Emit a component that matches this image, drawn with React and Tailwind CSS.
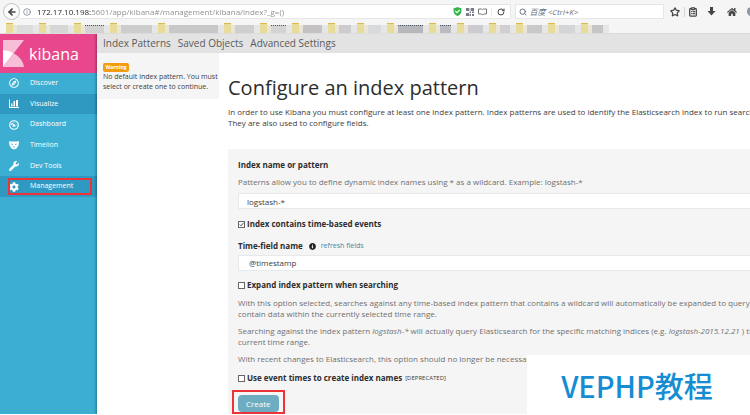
import React, { useState } from 'react';
import { FaHome, FaInfoCircle, FaRegCompass, FaWrench, FaCog } from 'react-icons/fa';
import { Search, Star, ClipboardList, RotateCw, Info, ArrowLeft } from 'lucide-react';

const bookmarks = [
  { width: 'w-[33px]', color: 'bg-[#dcdcdc]' },
  { width: 'w-[35px]', color: 'bg-[#d6d6d6]' },
  { width: 'w-[36px]', color: 'bg-[#d2d2d2]', label: true },
  { width: 'w-[48px]', color: 'bg-[#cdcdcd]' },
  { width: 'w-[66px]', color: 'bg-[#c8c8c8]' },
  { width: 'w-[36px]', color: 'bg-[#cfcfcf]' },
  { width: 'w-[32px]', color: 'bg-[#d4d4d4]', label: true },
  { width: 'w-[36px]', color: 'bg-[#c4c2c2]' },
  { width: 'w-[29px]', color: 'bg-[#cccccc]' },
  { width: 'w-[30px]', color: 'bg-[#d9dadc]' },
  { width: 'w-[42px]', color: 'bg-[#b8b8ba]', label: true },
  { width: 'w-[28px]', color: 'bg-[#bcbcc0]', label: true },
  { width: 'w-[32px]', color: 'bg-[#cbcbd0]' },
  { width: 'w-[27px]', color: 'bg-[#d0d0d0]' },
  { width: 'w-[32px]', color: 'bg-[#c9c9c9]' },
  { width: 'w-[33px]', color: 'bg-[#d3d5d8]' },
  { width: 'w-[28px]', color: 'bg-[#c6c6c6]' },
];

const ChartIcon = () => (
  <svg viewBox="0 0 20 20" className="size-[10px]" fill="currentColor">
    <path d="M0 1h2v15h18v2H0zM4 9h3v6H4zM9 4h3v11H9zM14 2h4v13h-4z" />
  </svg>
);

const DashboardIcon = () => (
  <svg viewBox="0 0 20 20" className="size-[10px]" fill="none" stroke="currentColor">
    <circle cx="10" cy="10" r="8.5" strokeWidth="2.4" />
    <path d="M5 10a5 5 0 0 1 2-4M10 4.5v1.5M15 10h-1.5M14 14l-1-1M6 14l1-1" strokeWidth="1.8" />
    <path d="M9.5 10.5l-3-4" strokeWidth="2.2" />
    <circle cx="10" cy="11" r="2.4" fill="currentColor" stroke="none" />
  </svg>
);

const TimelionIcon = () => (
  <svg viewBox="0 0 20 20" className="size-[10px]" fill="currentColor">
    <path
      fillRule="evenodd"
      d="M0 2l4 1h12l4-1-1 9-4 6-5 2-5-2-4-6zM5 7v2l3 1V8zM15 7l-3 1v2l3-1zM8 13l2 3 2-3z"
    />
  </svg>
);

const navItems = [
  { name: 'Discover', icon: <FaRegCompass className="size-[10px]" /> },
  { name: 'Visualize', icon: <ChartIcon />, active: true },
  { name: 'Dashboard', icon: <DashboardIcon /> },
  { name: 'Timelion', icon: <TimelionIcon /> },
  { name: 'Dev Tools', icon: <FaWrench className="size-[10px]" /> },
  { name: 'Management', icon: <FaCog className="size-[10px]" />, active: true, marked: true },
];

const BrowserBar = () => {
  const [url, setUrl] = useState('172.17.10.198:5601/app/kibana#/management/kibana/index?_g=()');

  return (
    <header className="bg-[#f5f5f5]">
      <div className="flex h-[23px] items-center pl-[3px] text-[#454545]">
        <button
          aria-label="Back"
          className="z-10 flex size-[17px] shrink-0 items-center justify-center rounded-full border border-[#c4c4c4] bg-[#fafafa]"
        >
          <ArrowLeft className="size-[10px]" strokeWidth={4} />
        </button>
        <div className="flex h-[15px] flex-1 items-center border-y border-r border-[#e6e6e6] bg-white">
          <Info className="ml-[3px] size-2 shrink-0 text-gray-500" />
          <input
            aria-label="Address"
            value={url}
            onChange={(e) => setUrl(e.target.value)}
            className="ml-[6px] min-w-0 flex-1 bg-[linear-gradient(90deg,#222_54px,#8a8a8a_54px)] bg-clip-text text-[8px] leading-[13px] text-transparent outline-none"
          />
          <svg viewBox="0 0 16 16" className="size-[9px] shrink-0">
            <path d="M1 2q4 0 7-2 3 2 7 2v6q-1 6-7 8-6-2-7-8z" fill="#36b44a" />
            <path d="M4 7l3 3 5-5" fill="none" stroke="#fff" strokeWidth="2" />
          </svg>
          <svg viewBox="0 0 16 16" className="ml-1 size-2 shrink-0" fill="#777b85">
            <path d="M0 0h6v6H0zM10 0h6v6h-6zM0 10h6v6H0zM7 7h3v3H7zM12 7h4v3h-4zM7 12h3v4H7zM12 12h4v4h-4zM7 1h2v4H7z" />
          </svg>
          <svg viewBox="0 0 18 16" className="ml-1 h-2 w-[9px] shrink-0" fill="none" stroke="#777" strokeWidth="2">
            <path d="M1 2h6l2 1 2-1h6v10h-6l-2 2-2-2H1z" />
          </svg>
          <span className="ml-1 h-2 border-l border-gray-200" />
          <button aria-label="Reload" className="mx-[5px]">
            <RotateCw className="size-2" strokeWidth={3} />
          </button>
        </div>
        <div className="ml-1 flex h-[15px] w-1/5 items-center border border-[#e6e6e6] bg-white">
          <Search className="ml-[3px] size-2 shrink-0 text-gray-500" strokeWidth={3} />
          <input
            aria-label="Search"
            placeholder="百度 <Ctrl+K>"
            className="ml-[3px] w-full min-w-0 text-[8px] leading-[13px] italic outline-none placeholder:text-gray-500"
          />
        </div>
        <div className="ml-[6px] flex w-[80px] items-center gap-[4px] overflow-hidden">
          <button aria-label="Bookmark" className="shrink-0"><Star className="size-[10px]" strokeWidth={3} /></button>
          <button aria-label="Bookmarks list" className="shrink-0 border-l border-gray-300 pl-[3px]">
            <ClipboardList className="size-[10px]" strokeWidth={3} />
          </button>
          <button aria-label="Downloads" className="shrink-0 px-[5px]">
            <svg viewBox="0 0 18 18" className="size-[9px]" fill="currentColor">
              <path d="M6 0h6v8h5l-8 9-8-9h5z" />
            </svg>
          </button>
          <button aria-label="Home" className="shrink-0 px-[2px]"><FaHome className="size-[10px]" /></button>
          <span className="ml-1 size-[9px] shrink-0 rounded-full bg-[#8b93a0]" />
        </div>
      </div>
      <div className="flex h-[11px] border-b border-[#dcdcdc] pl-[6px]">
        {bookmarks.map((bookmark, i) => (
          <div key={i} className={`flex h-[10px] items-stretch ${bookmark.width}`}>
            <span className="w-[7px] border-t border-[#dcb94a] bg-[#e8dc9a]" />
            <span className="mt-[2px] w-1 bg-[#e9e6d8]" />
            <span
              className={`mt-[2px] flex-1 border-t ${bookmark.color} ${bookmark.label ? 'border-dotted border-gray-600' : 'border-transparent'}`}
            />
            <span className="mt-[2px] w-[6px] bg-[#e6e6e6]" />
          </div>
        ))}
      </div>
    </header>
  );
};

const Sidebar = () => (
  <aside className="w-[97px] shrink-0 bg-[#3caed2] text-white shadow-[inset_-4px_0_3px_-3px_rgba(0,0,0,0.35)]">
    <div className="flex h-[39px] items-center bg-[#e8488b] pl-[3px] shadow-[inset_-4px_0_3px_-3px_rgba(0,0,0,0.35)]">
      <svg viewBox="0 0 63 81" className="h-[27px] w-[21px]">
        <path d="M0 0h63L32 40Q18 30 0 30z" fill="#f6bfd7" />
        <path d="M0 30q18 0 32 10L0 81z" fill="#fff" />
        <path d="M32 40q27 15 31 41H0z" fill="#f6bfd7" />
      </svg>
      <span className="ml-[5px] text-[16px] leading-6 font-medium">kibana</span>
    </div>
    <nav className="grid h-[124px] grid-rows-6">
      {navItems.map((item) => (
        <a
          key={item.name}
          href={`#/${item.name}`}
          className={`relative flex items-center gap-[11px] pl-[9px] text-[7px] ${item.active ? 'bg-[#2f99c1] shadow-[inset_-4px_0_3px_-3px_rgba(0,0,0,0.35)]' : ''}`}
        >
          {item.icon}
          {item.name}
          {item.marked && <span className="absolute inset-y-[2px] right-[5px] left-2 border-2 border-[#ee3338]" />}
        </a>
      ))}
    </nav>
  </aside>
);

const CheckField = ({ id, label, note, defaultChecked }) => {
  const [checked, setChecked] = useState(!!defaultChecked);

  return (
    <div className="flex h-3 items-center">
      <span className="relative flex">
        <input
          id={id}
          type="checkbox"
          checked={checked}
          onChange={(e) => setChecked(e.target.checked)}
          className="size-[7px] appearance-none border border-[#666] bg-white"
        />
        {checked && (
          <svg viewBox="0 0 8 8" className="pointer-events-none absolute inset-0 size-[7px]" fill="none" stroke="#333">
            <path d="M2 4l1.5 1.5L6.5 2" />
          </svg>
        )}
      </span>
      <label htmlFor={id} className="ml-[2px] font-bold text-[#2d2d2d]">{label}</label>
      {note && <small className="ml-[3px] text-[6px]">{note}</small>}
    </div>
  );
};

const IndexPatternForm = () => {
  const [pattern, setPattern] = useState('logstash-*');

  return (
    <form className="mt-[21px] flex-1 bg-[#f5f5f5] pt-[10px] pl-[10px] whitespace-nowrap">
      <label htmlFor="pattern" className="block leading-3 font-bold text-[#2d2d2d]">Index name or pattern</label>
      <p className="mt-[5px] leading-3 text-[#707070]">
        Patterns allow you to define dynamic index names using * as a wildcard. Example: logstash-*
      </p>
      <input
        id="pattern"
        value={pattern}
        onChange={(e) => setPattern(e.target.value)}
        className="mt-[5px] block h-4 w-full border border-r-0 border-[#e4eaec] bg-white pl-2 outline-none"
      />
      <div className="mt-[9px]">
        <CheckField id="time-based" label="Index contains time-based events" defaultChecked />
      </div>
      <div className="mt-[10px] flex h-3 items-center">
        <label htmlFor="time-field" className="font-bold text-[#2d2d2d]">Time-field name</label>
        <FaInfoCircle className="ml-[6px] size-[7px] text-[#222]" />
        <a href="#refresh" className="ml-[5px] text-[7px] text-[#328caa]">refresh fields</a>
      </div>
      <select
        id="time-field"
        className="mt-[3px] block h-4 w-full appearance-none border border-r-0 border-[#e4eaec] bg-white pl-[10px] outline-none"
      >
        <option>@timestamp</option>
      </select>
      <div className="mt-2">
        <CheckField id="expand" label="Expand index pattern when searching" />
      </div>
      <div className="mt-[6px] space-y-[6px] leading-[11px] text-[#707070]">
        <p>
          With this option selected, searches against any time-based index pattern that contains a wildcard will automatically be expanded to query only the indices that
          <br />
          contain data within the currently selected time range.
        </p>
        <p>
          Searching against the index pattern <em>logstash-*</em> will actually query Elasticsearch for the specific matching indices (e.g. <em>logstash-2015.12.21</em> ) that fall within the
          <br />
          current time range.
        </p>
        <p>With recent changes to Elasticsearch, this option should no longer be necessary and</p>
      </div>
      <div className="mt-2">
        <CheckField id="event-times" label="Use event times to create index names" note="[DEPRECATED]" />
      </div>
      <div className="mt-[6px] -ml-[6px] inline-block border-2 border-[#ee3338] px-1 pt-[3px]">
        <button type="button" className="block h-[17px] rounded-sm bg-[#6eadc1] px-2 text-white">Create</button>
      </div>
    </form>
  );
};

const App = () => {
  return (
    <div className="relative flex min-h-screen flex-col overflow-hidden bg-white font-['Open_Sans','Noto_Sans_CJK_SC',sans-serif] text-[8px] text-[#3c3c3c]">
      <BrowserBar />
      <div className="mb-[2px] flex flex-1">
        <Sidebar />
        <div className="flex min-w-0 flex-1 flex-col">
          <nav className="flex h-[19px] items-center gap-[7px] bg-[#e3e3e3] pl-[6px] text-[10px] text-[#5a5a5a]">
            <a href="#/indices">Index Patterns</a>
            <a href="#/objects">Saved Objects</a>
            <a href="#/settings">Advanced Settings</a>
          </nav>
          <div className="flex flex-1 items-start">
            <div className="w-[122px] shrink-0 bg-[#f5f5f5] pt-[10px] pb-[7px] pl-[6px] text-[7px] leading-[10px]">
              <span className="block w-[26px] rounded-xs bg-[#f39c12] text-center text-[5px] leading-[9px] font-bold text-white">
                Warning
              </span>
              <p className="whitespace-nowrap">
                No default index pattern. You must
                <br />
                select or create one to continue.
              </p>
            </div>
            <main className="flex min-w-0 flex-1 flex-col self-stretch overflow-hidden pt-[21px] pl-[9px]">
              <h1 className="text-[20px] leading-7 text-[#2d2d2d]">Configure an index pattern</h1>
              <p className="mt-1 leading-[11px] whitespace-nowrap">
                In order to use Kibana you must configure at least one index pattern. Index patterns are used to identify the Elasticsearch index to run search and analytics against.
                <br />
                They are also used to configure fields.
              </p>
              <IndexPatternForm />
            </main>
          </div>
        </div>
      </div>
      <div className="absolute right-0 bottom-0 flex h-[61px] w-[223px] items-center justify-center bg-white pr-[3px] font-['Noto_Sans_CJK_SC',sans-serif] text-[29px] leading-none font-medium text-[#168dd2]">
        VEPHP教程
      </div>
    </div>
  );
};

export default App;
